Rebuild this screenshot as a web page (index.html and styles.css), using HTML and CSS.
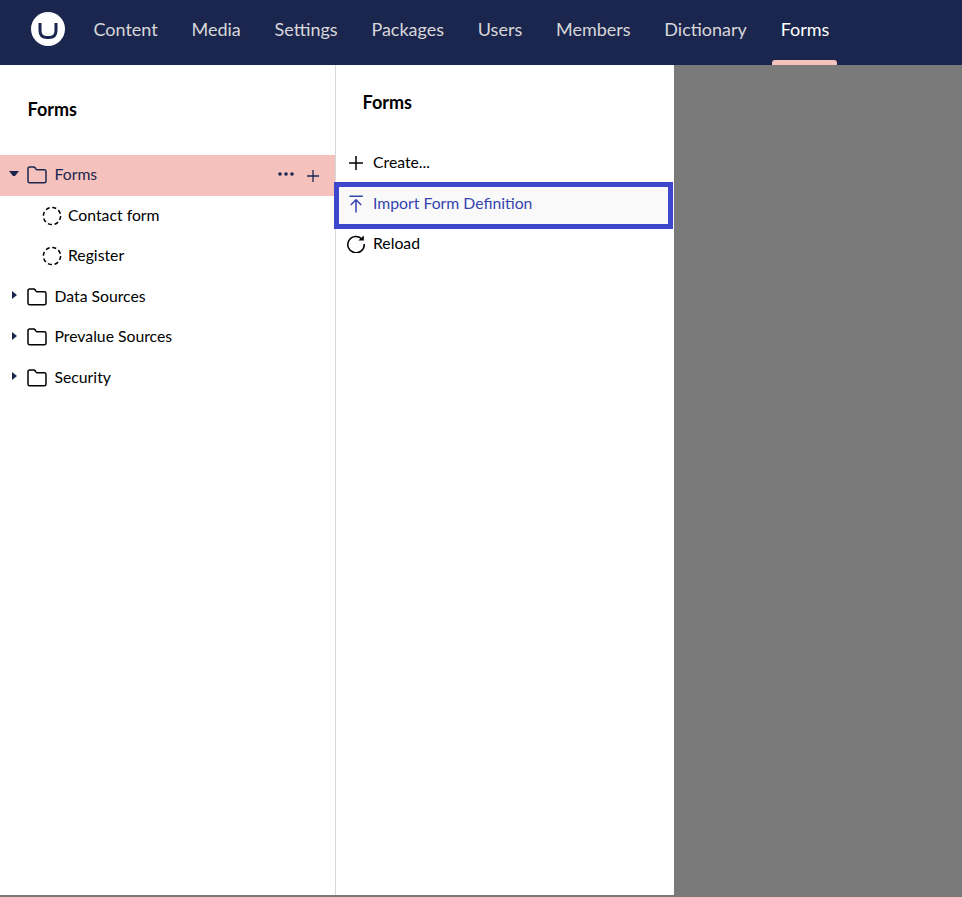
FILE: index.html
```html
<!DOCTYPE html>
<html lang="en">
    <head>
        <meta charset="UTF-8">
        <meta name="viewport" content="width=device-width, initial-scale=1.0">
        <title>Forms</title>
        <link rel="stylesheet" href="styles.css">
    </head>
    <body>
        <header class="topbar">
            <div class="logo">
                <svg width="36" height="36" viewBox="0 0 36 36">
                    <circle cx="18" cy="18" r="17" fill="#fff"/>
                    <path d="M10 12 V19.5 Q10 26.5 17 26.5 H19 Q26 26.5 26 19.5 V12" fill="none" stroke="#1b264f" stroke-width="3"/>
                </svg>
            </div>
            <nav class="sections">
                <a class="section">Content</a>
                <a class="section">Media</a>
                <a class="section">Settings</a>
                <a class="section">Packages</a>
                <a class="section">Users</a>
                <a class="section">Members</a>
                <a class="section">Dictionary</a>
                <a class="section active">Forms</a>
            </nav>
        </header>

        <main class="workspace">
            <section class="tree-panel">
                <h2 class="tree-title">Forms</h2>
                <ul class="tree">
                    <li class="tree-row selected">
                        <span class="caret caret-down"></span>
                        <svg class="folder" viewBox="0 0 20 18"><path d="M1 3 Q1 1 2.6 1 H6.6 Q7.6 1 8.3 2 L9 3.1 Q9.5 3.8 10.4 3.8 H17.4 Q19 3.8 19 5.4 V15 Q19 16.8 17.4 16.8 H2.6 Q1 16.8 1 15 Z"/></svg>
                        <span class="tree-label">Forms</span>
                        <span class="row-actions">
                            <svg class="dots" width="16" height="6" viewBox="0 0 16 6"><circle cx="2" cy="3" r="1.8"/><circle cx="8" cy="3" r="1.8"/><circle cx="14" cy="3" r="1.8"/></svg>
                            <svg class="plus" width="14" height="14" viewBox="0 0 14 14"><path d="M7 1 V13 M1 7 H13"/></svg>
                        </span>
                    </li>
                    <li class="tree-row child">
                        <svg class="dashed" viewBox="0 0 20 20"><circle cx="10" cy="10" r="8.6"/></svg>
                        <span class="tree-label">Contact form</span>
                    </li>
                    <li class="tree-row child">
                        <svg class="dashed" viewBox="0 0 20 20"><circle cx="10" cy="10" r="8.6"/></svg>
                        <span class="tree-label">Register</span>
                    </li>
                    <li class="tree-row">
                        <span class="caret caret-right"></span>
                        <svg class="folder" viewBox="0 0 20 18"><path d="M1 3 Q1 1 2.6 1 H6.6 Q7.6 1 8.3 2 L9 3.1 Q9.5 3.8 10.4 3.8 H17.4 Q19 3.8 19 5.4 V15 Q19 16.8 17.4 16.8 H2.6 Q1 16.8 1 15 Z"/></svg>
                        <span class="tree-label">Data Sources</span>
                    </li>
                    <li class="tree-row">
                        <span class="caret caret-right"></span>
                        <svg class="folder" viewBox="0 0 20 18"><path d="M1 3 Q1 1 2.6 1 H6.6 Q7.6 1 8.3 2 L9 3.1 Q9.5 3.8 10.4 3.8 H17.4 Q19 3.8 19 5.4 V15 Q19 16.8 17.4 16.8 H2.6 Q1 16.8 1 15 Z"/></svg>
                        <span class="tree-label">Prevalue Sources</span>
                    </li>
                    <li class="tree-row">
                        <span class="caret caret-right"></span>
                        <svg class="folder" viewBox="0 0 20 18"><path d="M1 3 Q1 1 2.6 1 H6.6 Q7.6 1 8.3 2 L9 3.1 Q9.5 3.8 10.4 3.8 H17.4 Q19 3.8 19 5.4 V15 Q19 16.8 17.4 16.8 H2.6 Q1 16.8 1 15 Z"/></svg>
                        <span class="tree-label">Security</span>
                    </li>
                </ul>
            </section>

            <section class="menu-panel">
                <h2 class="menu-title">Forms</h2>
                <ul class="menu">
                    <li class="menu-row">
                        <svg class="menu-icon" viewBox="0 0 18 18"><path d="M9 2 V16 M2 9 H16"/></svg>
                        <span>Create...</span>
                    </li>
                    <li class="menu-row highlighted">
                        <svg class="menu-icon" viewBox="0 0 18 18"><path d="M2.5 1.2 H15.8 M9 17.6 V5 M3.8 10 L9 4.8 L14.2 10"/></svg>
                        <span>Import Form Definition</span>
                    </li>
                    <li class="menu-row">
                        <svg class="menu-icon" viewBox="0 0 18 18"><path d="M15.2 4.2 A8.2 8.2 0 1 0 17.2 9"/><path class="fill-arrow" d="M11.4 5.6 H16.8 V0.4 Z"/></svg>
                        <span>Reload</span>
                    </li>
                </ul>
            </section>

            <div class="backdrop"></div>
        </main>
    </body>
</html>
```
FILE: styles.css
```css
* {
    box-sizing: border-box;
}

body {
    margin: 0;
    height: 897px;
    overflow: hidden;
    font-family: Lato, "Open Sans", sans-serif;
    font-size: 15.75px;
    color: #1b264f;
    background-color: #7a7a7a;
}

ul {
    list-style: none;
    margin: 0;
    padding: 0;
}

.topbar {
    display: flex;
    align-items: center;
    height: 65px;
    background-color: #1b264f;
}

.logo {
    display: flex;
    margin-left: 30px;
    margin-right: 10.6px;
    margin-bottom: 7px;
}

.sections {
    display: flex;
    height: 100%;
}

.section {
    position: relative;
    display: flex;
    align-items: center;
    padding: 0 16.875px 8px;
    font-size: 18px;
    color: #d8d7d9;
}

.section.active {
    color: #fff;
}

.section.active::after {
    content: "";
    position: absolute;
    left: 8px;
    right: 9px;
    bottom: 0;
    height: 5px;
    border-radius: 3px 3px 0 0;
    background-color: #f5c1bc;
}

.workspace {
    display: flex;
    height: 830px;
}

.tree-panel {
    width: 336px;
    background-color: #fff;
    border-right: 1px solid #d8d7d9;
}

.tree-title {
    margin: 0;
    padding: 33px 0 0 27.5px;
    height: 90px;
    font-size: 18px;
    line-height: 22px;
    font-weight: 700;
    color: #000;
}

.tree-row {
    display: flex;
    align-items: center;
    height: 40.5px;
    padding-left: 9px;
    color: #000;
}

.tree-row.selected {
    color: #1b264f;
    background-color: #f5c1bc;
}

.tree-row.child {
    padding-left: 41.5px;
}

.tree-label {
    padding-bottom: 3px;
}

.caret {
    width: 0;
    height: 0;
    margin-bottom: 3px;
}

.caret-down {
    width: 10px;
    border-left: 4.5px solid transparent;
    border-right: 4.5px solid transparent;
    border-top: 5px solid #1b264f;
    margin-right: 8px;
}

.caret-right {
    width: 6px;
    margin-left: 3px;
    margin-right: 9px;
    border-top: 4.5px solid transparent;
    border-bottom: 4.5px solid transparent;
    border-left: 5px solid #1b264f;
}

.folder {
    width: 20px;
    height: 18px;
    margin-right: 7.5px;
    fill: none;
    stroke: #000;
    stroke-width: 1.5;
}

.selected .folder {
    stroke: #1b264f;
}

.dashed {
    width: 20px;
    height: 20px;
    margin-right: 6.5px;
    fill: none;
    stroke: #000;
    stroke-width: 1.5;
    stroke-dasharray: 4.1 2.65;
}

.row-actions {
    display: flex;
    align-items: center;
    gap: 12px;
    margin-left: auto;
    margin-right: 15px;
}

.dots {
    fill: #1b264f;
    margin-bottom: 3px;
}

.plus {
    fill: none;
    stroke: #1b264f;
    stroke-width: 1.3;
    margin-top: 1.5px;
}

.menu-panel {
    width: 338px;
    background-color: #fff;
}

.menu-title {
    margin: 0;
    padding: 26px 0 0 26.5px;
    height: 76.5px;
    font-size: 18px;
    line-height: 22px;
    font-weight: 700;
    color: #000;
}

.menu-row {
    position: relative;
    display: flex;
    align-items: center;
    height: 40.5px;
    padding-left: 11px;
    color: #000;
}

.menu-icon {
    width: 18px;
    height: 18px;
    margin-top: 3px;
    margin-right: 8px;
    fill: none;
    stroke: currentColor;
    stroke-width: 1.5;
}

.fill-arrow {
    fill: currentColor;
    stroke: none;
}

.menu-row.highlighted {
    color: #3544b1;
    background-color: #f9f9f9;
    box-shadow: 0 2px 0 #f9f9f9;
}

/* the blue frame sits over the row and runs past it a bit */
.menu-row.highlighted::after {
    content: "";
    position: absolute;
    left: -2px;
    right: 1px;
    top: 0;
    bottom: -6.5px;
    border: 5px solid #3f48cc;
    pointer-events: none;
}

.backdrop {
    flex: 1;
    background-color: #7a7a7a;
}
```
